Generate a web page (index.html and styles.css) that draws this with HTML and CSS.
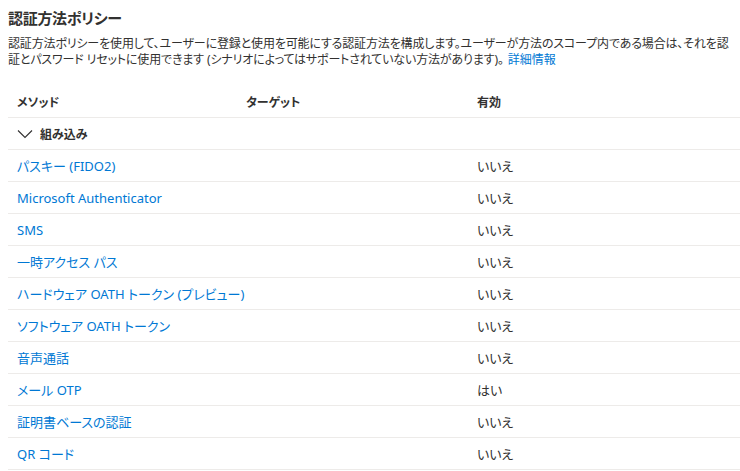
FILE: index.html
```html
<!DOCTYPE html>
<html lang="ja">
<head>
<meta charset="utf-8">
<link rel="stylesheet" href="styles.css">
</head>
<body>
<div class="page">
  <h2 class="title">認証方法ポリシー</h2>
  <p class="desc">認証方法ポリシーを使用して、ユーザーに登録と使用を可能にする認証方法を構成します。ユーザーが方法のスコープ内である場合は、それを認証とパスワード リセットに使用できます (シナリオによってはサポートされていない方法があります)。<a class="link more" href="#">詳細情報</a></p>
  <div class="table">
    <div class="row head">
      <div class="c1">メソッド</div>
      <div class="c2">ターゲット</div>
      <div class="c3">有効</div>
    </div>
    <div class="row group">
      <div class="c1 grp">
        <svg class="chev" width="16" height="10" viewBox="0 0 16 10"><path d="M1 1.5 L8 8.5 L15 1.5" fill="none" stroke="#323130" stroke-width="1.1"/></svg>
        <span>組み込み</span>
      </div>
    </div>
    <div class="row"><div class="c1"><a class="link" href="#">パスキー (FIDO2)</a></div><div class="c2"></div><div class="c3">いいえ</div></div>
    <div class="row"><div class="c1"><a class="link" href="#">Microsoft Authenticator</a></div><div class="c2"></div><div class="c3">いいえ</div></div>
    <div class="row"><div class="c1"><a class="link" href="#">SMS</a></div><div class="c2"></div><div class="c3">いいえ</div></div>
    <div class="row"><div class="c1"><a class="link" href="#">一時アクセス パス</a></div><div class="c2"></div><div class="c3">いいえ</div></div>
    <div class="row"><div class="c1"><a class="link" href="#">ハードウェア OATH トークン (プレビュー)</a></div><div class="c2"></div><div class="c3">いいえ</div></div>
    <div class="row"><div class="c1"><a class="link" href="#">ソフトウェア OATH トークン</a></div><div class="c2"></div><div class="c3">いいえ</div></div>
    <div class="row"><div class="c1"><a class="link" href="#">音声通話</a></div><div class="c2"></div><div class="c3">いいえ</div></div>
    <div class="row"><div class="c1"><a class="link" href="#">メール OTP</a></div><div class="c2"></div><div class="c3">はい</div></div>
    <div class="row"><div class="c1"><a class="link" href="#">証明書ベースの認証</a></div><div class="c2"></div><div class="c3">いいえ</div></div>
    <div class="row"><div class="c1"><a class="link" href="#">QR コード</a></div><div class="c2"></div><div class="c3">いいえ</div></div>
  </div>
</div>
</body>
</html>
```
FILE: styles.css
```css
html, body {
  margin: 0;
  padding: 0;
  background: #ffffff;
}
body {
  font-family: "Noto Sans", "Noto Sans CJK JP", sans-serif;
  color: #323130;
  font-size: 13px;
}
.page {
  padding: 8px 0 0 8px;
}
.title {
  margin: 0;
  font-size: 15px;
  font-weight: 700;
  line-height: 20px;
  font-feature-settings: "palt";
  letter-spacing: -0.3px;
}
.desc {
  margin: 8px 0 0 0;
  width: 728px;
  font-size: 12px;
  line-height: 16px;
  font-feature-settings: "palt";
  letter-spacing: -0.15px;
}
.link {
  color: #0078d4;
  text-decoration: none;
}
.more {
  margin-left: 4px;
  letter-spacing: 0;
}
.table {
  margin-top: 18px;
}
.row {
  display: grid;
  grid-template-columns: 229px 231px 1fr;
  height: 31px;
  align-items: center;
  border-bottom: 1px solid #edebe9;
  font-size: 13px;
  font-feature-settings: "palt";
}
.row > div {
  padding-left: 9px;
  white-space: nowrap;
}
.head {
  font-weight: 700;
  font-size: 12px;
}
.grp {
  display: flex;
  align-items: center;
  gap: 7px;
  font-weight: 700;
  font-size: 12px;
}
.chev {
  display: block;
}
```
